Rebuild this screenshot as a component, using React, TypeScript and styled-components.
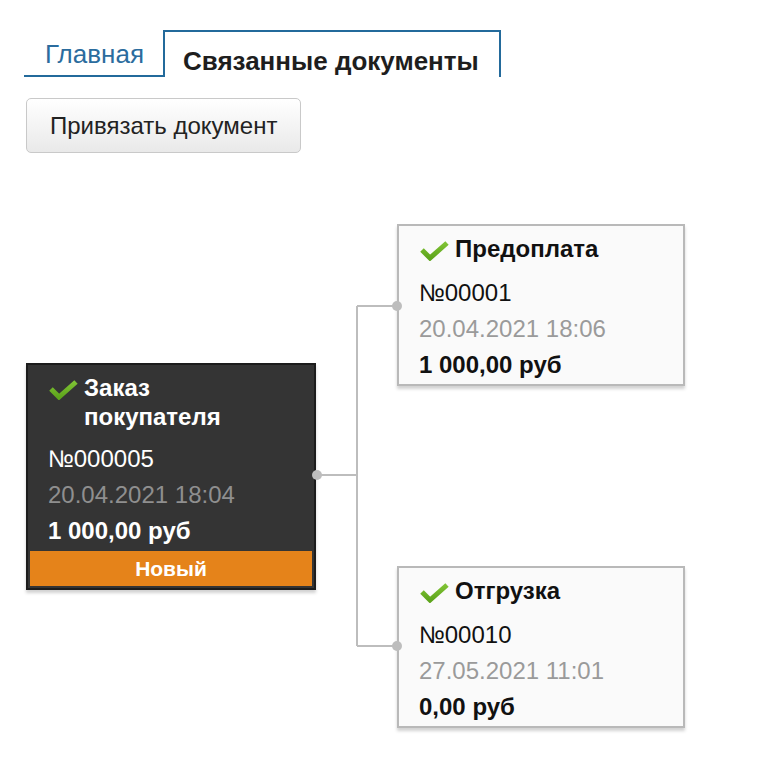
import React from "react";
import styled, { createGlobalStyle } from "styled-components";

const GlobalStyle = createGlobalStyle`
  html, body { margin: 0; padding: 0; background: #ffffff; }
  body { font-family: "Liberation Sans", Arial, Helvetica, sans-serif; color: #111; }
`;

const Page = styled.div`
  padding: 30px 0 40px 24px;
`;

const TabBar = styled.div`
  display: flex;
  align-items: flex-end;
`;

const Tab = styled.div<{ $active?: boolean }>`
  font-size: 26px;
  line-height: 28px;
  box-sizing: border-box;
  padding: ${(p) => (p.$active ? "15px 20px 2px 18px" : "0 19px 7px 21px")};
  color: ${(p) => (p.$active ? "#1e1e1e" : "#2b6c9e")};
  font-weight: ${(p) => (p.$active ? 700 : 400)};
  border-bottom: ${(p) => (p.$active ? "none" : "2px solid #236a9b")};
  border-top: ${(p) => (p.$active ? "2px solid #236a9b" : "none")};
  border-left: ${(p) => (p.$active ? "2px solid #236a9b" : "none")};
  border-right: ${(p) => (p.$active ? "2px solid #236a9b" : "none")};
`;

const Button = styled.button`
  display: block;
  margin: 21px 0 0 2px;
  height: 55px;
  padding: 0 23px;
  font-family: "Liberation Sans", Arial, sans-serif;
  font-size: 24px;
  color: #222;
  background: linear-gradient(#ffffff, #e9e9e9);
  border: 1px solid #c9c9c9;
  border-radius: 5px;
  cursor: pointer;
`;

const Diagram = styled.div`
  margin: 71px 0 0 2px;
  display: flex;
  align-items: center;
`;

const Column = styled.div`
  display: flex;
  flex-direction: column;
  gap: 180px;
`;

const Card = styled.div<{ $dark?: boolean }>`
  box-sizing: border-box;
  width: ${(p) => (p.$dark ? 290 : 288)}px;
  padding: ${(p) => (p.$dark ? "8px 2px 2px 2px" : "8px 2px 1px 2px")};
  background: ${(p) => (p.$dark ? "#343434" : "#fafafa")};
  border: 2px solid ${(p) => (p.$dark ? "#1c1c1c" : "#b9b9b9")};
  box-shadow: 0 3px 3px rgba(0, 0, 0, 0.18);
  color: ${(p) => (p.$dark ? "#ffffff" : "#111111")};
`;

const CardBody = styled.div`
  padding: 0 18px;
`;

const TitleRow = styled.div`
  display: flex;
  align-items: flex-start;
  gap: 6px;
  margin-bottom: 10px;
`;

const CheckWrap = styled.div`
  flex: none;
  height: 29px;
  display: flex;
  align-items: center;
  padding-top: 2px;
`;

const Title = styled.div`
  max-width: 190px;
  font-size: 24px;
  line-height: 29px;
  font-weight: 700;
`;

const Row = styled.div<{ $muted?: boolean; $bold?: boolean; $dark?: boolean }>`
  font-size: 24px;
  line-height: 36px;
  font-weight: ${(p) => (p.$bold ? 700 : 400)};
  color: ${(p) => (p.$muted ? (p.$dark ? "#8f8f8f" : "#9a9a9a") : "inherit")};
`;

const Status = styled.div`
  margin-top: 2px;
  height: 35px;
  line-height: 35px;
  background: #e5831a;
  color: #ffffff;
  text-align: center;
  font-size: 21px;
  font-weight: 700;
`;

const ConnectorBox = styled.div`
  width: 81px;
  height: 500px;
  flex: none;
  position: relative;
  z-index: 1;
`;

const ConnectorSvg = styled.svg`
  overflow: visible;
  display: block;
`;

const Check = () => (
  <svg width="30" height="21" viewBox="0 0 30 21">
    <defs>
      <linearGradient id="chk" x1="0" y1="0" x2="0" y2="1">
        <stop offset="0" stopColor="#7fc234" />
        <stop offset="1" stopColor="#5ea51c" />
      </linearGradient>
    </defs>
    <polyline
      points="3,10 11,18 28,3"
      fill="none"
      stroke="url(#chk)"
      strokeWidth="5"
      strokeLinejoin="miter"
      strokeLinecap="butt"
    />
  </svg>
);

type Doc = {
  title: string;
  number: string;
  date: string;
  sum: string;
};

const DocCard = ({ doc, dark, status }: { doc: Doc; dark?: boolean; status?: string }) => (
  <Card $dark={dark}>
    <CardBody>
      <TitleRow>
        <CheckWrap>
          <Check />
        </CheckWrap>
        <Title>{doc.title}</Title>
      </TitleRow>
      <Row>{doc.number}</Row>
      <Row $muted $dark={dark}>
        {doc.date}
      </Row>
      <Row $bold>{doc.sum}</Row>
    </CardBody>
    {status && <Status>{status}</Status>}
  </Card>
);

const Connector = () => (
  <ConnectorBox>
    <ConnectorSvg width="81" height="500" viewBox="0 0 81 500">
      <g stroke="#bdbdbd" strokeWidth="2" fill="none">
        <line x1="0" y1="249" x2="41" y2="249" />
        <line x1="41" y1="80" x2="41" y2="420" />
        <line x1="41" y1="80" x2="81" y2="80" />
        <line x1="41" y1="420" x2="81" y2="420" />
      </g>
      <g fill="#bdbdbd">
        <circle cx="1" cy="249" r="5" />
        <circle cx="81" cy="80" r="5" />
        <circle cx="81" cy="420" r="5" />
      </g>
    </ConnectorSvg>
  </ConnectorBox>
);

export default function App() {
  return (
    <Page>
      <GlobalStyle />
      <TabBar>
        <Tab>Главная</Tab>
        <Tab $active>Связанные документы</Tab>
      </TabBar>
      <Button>Привязать документ</Button>
      <Diagram>
        <DocCard
          dark
          status="Новый"
          doc={{ title: "Заказ покупателя", number: "№000005", date: "20.04.2021 18:04", sum: "1 000,00 руб" }}
        />
        <Connector />
        <Column>
          <DocCard doc={{ title: "Предоплата", number: "№00001", date: "20.04.2021 18:06", sum: "1 000,00 руб" }} />
          <DocCard doc={{ title: "Отгрузка", number: "№00010", date: "27.05.2021 11:01", sum: "0,00 руб" }} />
        </Column>
      </Diagram>
    </Page>
  );
}
